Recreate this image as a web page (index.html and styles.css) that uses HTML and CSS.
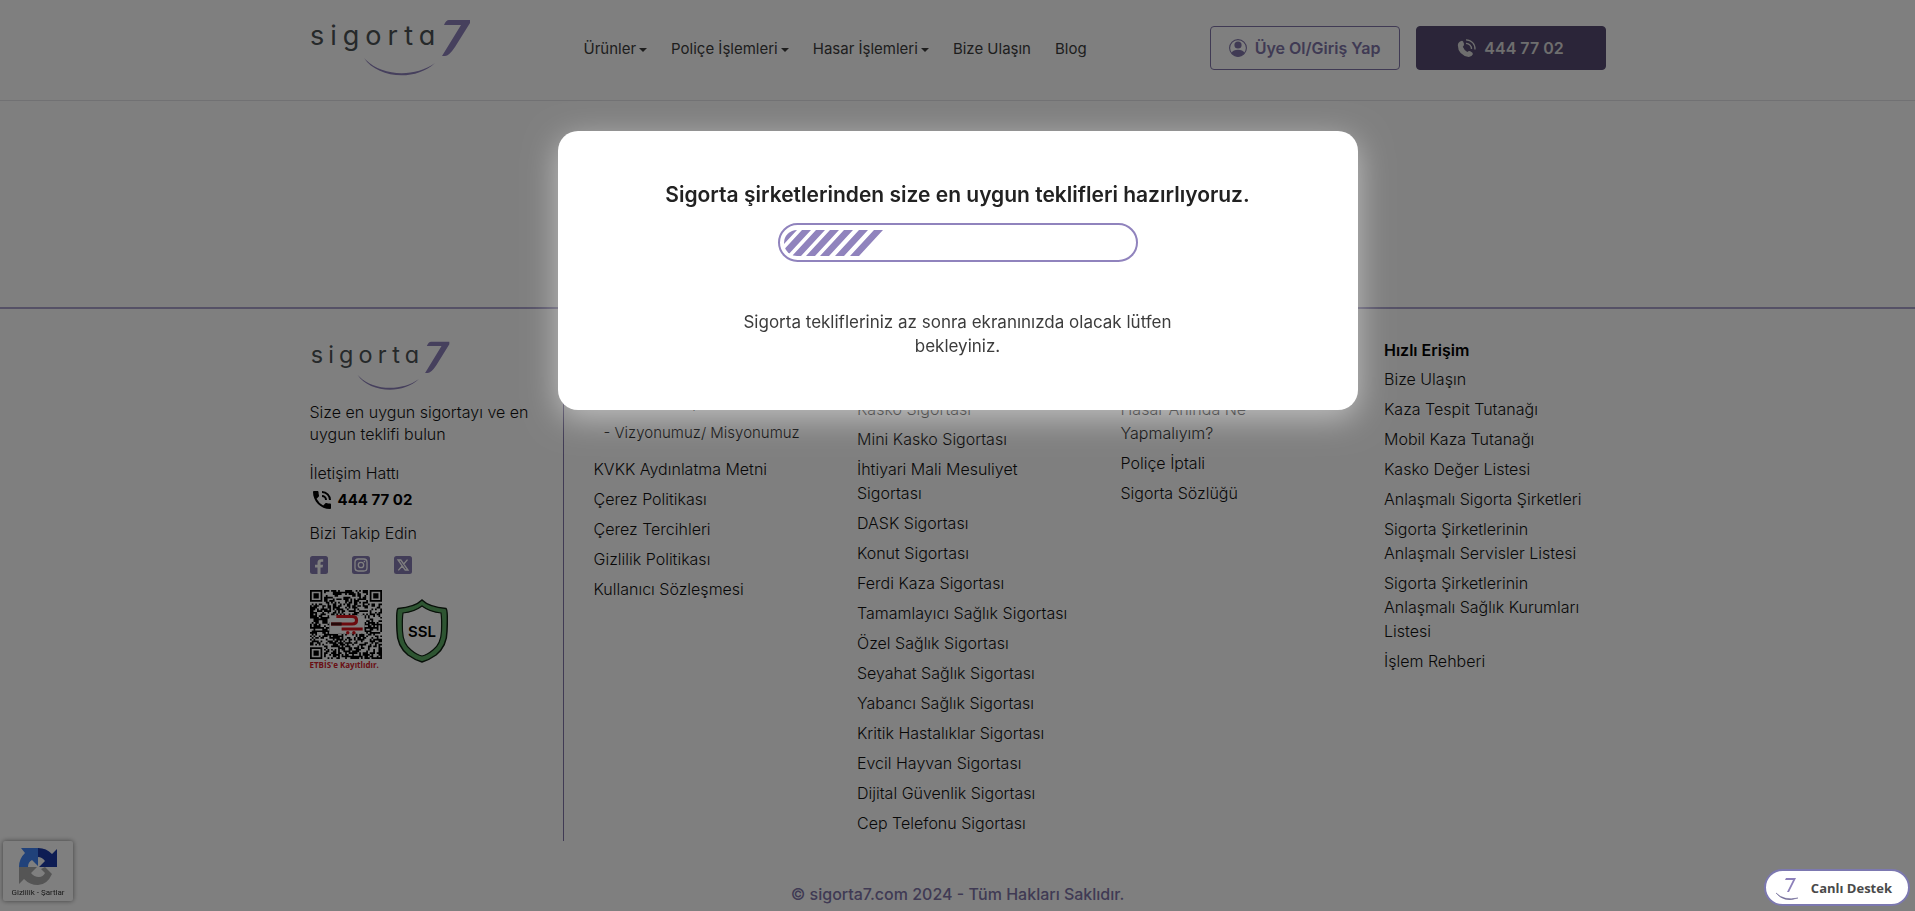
FILE: index.html
```html
<!DOCTYPE html>
<html lang="tr">
<head>
  <meta charset="UTF-8" />
  <meta name="viewport" content="width=device-width, initial-scale=1.0"/>
  <title>sigorta7 - Teklifler</title>
  <link rel="stylesheet" href="styles.css">
</head>
<body>

  <header class="header">
    <div class="container header-row">
      <a class="logo" href="#">
        <svg width="160" height="60" viewBox="0 0 160 60">
          <text class="logo-text" x="0" y="27">sigorta</text>
          <path class="logo-mark" d="M139 2H160V5L145 29Q139 38 135 38H132L151 7H134Q136 2 139 2Z"/>
          <path class="logo-mark" d="M54 40C67 60 105 64 125 45C104 60 72 58 56 42Z"/>
        </svg>
      </a>
      <nav class="nav">
        <a class="dropdown" href="#">Ürünler</a>
        <a class="dropdown" href="#">Poliçe İşlemleri</a>
        <a class="dropdown" href="#">Hasar İşlemleri</a>
        <a href="#">Bize Ulaşın</a>
        <a href="#">Blog</a>
      </nav>
      <div class="actions">
        <button class="btn btn-outline">
          <svg width="18" height="18" viewBox="0 0 18 18">
            <circle cx="9" cy="9" r="8.4" fill="none" stroke="currentColor" stroke-width="1.1"/>
            <circle cx="9" cy="6" r="3.6" fill="currentColor"/>
            <path d="M2.4 14C3.5 11.6 6 10.8 9 10.8S14.5 11.6 15.6 14Q13 17.4 9 17.4T2.4 14Z" fill="currentColor"/>
          </svg>
          Üye Ol/Giriş Yap
        </button>
        <a class="btn btn-dark" href="tel:4447702">
          <svg width="19" height="19" viewBox="0 0 19 19">
            <path d="M3 2.5L5 1.8Q6.3 1.9 7 5Q7.2 6.7 5.8 7.8Q7 11 10.3 13Q11.8 11.5 13.3 12.2Q16.4 13.8 15.9 15.2Q14.4 18 11.8 18Q1 16 .8 6Q.9 3.6 3 2.5Z" fill="currentColor"/>
            <path d="M9 .8A9 9 0 0 1 18 10.5M9 4.3A5.6 5.6 0 0 1 14.5 10" fill="none" stroke="currentColor" stroke-width="1.3"/>
          </svg>
          444 77 02
        </a>
      </div>
    </div>
  </header>

  <main class="content"></main>

  <footer class="footer">
    <div class="container footer-row">
      <div class="about">
        <a class="logo" href="#">
          <svg width="140" height="52" viewBox="0 0 160 60">
            <text class="logo-text" x="0" y="27">sigorta</text>
            <path class="logo-mark" d="M139 2H160V5L145 29Q139 38 135 38H132L151 7H134Q136 2 139 2Z"/>
            <path class="logo-mark" d="M54 40C67 60 105 64 125 45C104 60 72 58 56 42Z"/>
          </svg>
        </a>
        <p class="slogan">Size en uygun sigortayı ve en uygun teklifi bulun</p>
        <p>İletişim Hattı</p>
        <a class="phone" href="tel:4447702">
          <svg width="24" height="24" viewBox="0 0 24 24">
            <path d="M20 15.5c-1.2 0-2.5-.2-3.6-.6h-.3c-.3 0-.5.1-.7.3l-2.2 2.2a15 15 0 0 1-6.6-6.6l2.2-2.2c.3-.3.4-.7.2-1-.3-1.1-.5-2.4-.5-3.6 0-.5-.5-1-1-1H4c-.5 0-1 .5-1 1 0 9.4 7.6 17 17 17 .5 0 1-.5 1-1v-3.5c0-.5-.5-1-1-1zM19 12h2a9 9 0 0 0-9-9v2a7 7 0 0 1 7 7zM15 12h2a5 5 0 0 0-5-5v2a3 3 0 0 1 3 3z" fill="currentColor"/>
          </svg>
          444 77 02
        </a>
        <p>Bizi Takip Edin</p>
        <div class="social">
          <a href="#" aria-label="Facebook">
            <svg width="18" height="18" viewBox="0 0 18 18">
              <rect width="18" height="18" rx="2.5" fill="#857ab0"/>
              <path d="M7.5 18V11.5H5V8.7H7.5V6.8Q7.5 3.2 11 3.2H13.2V5.8H11.8Q10.5 5.8 10.5 7V8.7H13.1L12.6 11.5H10.5V18Z" fill="#fff"/>
            </svg>
          </a>
          <a href="#" aria-label="Instagram">
            <svg width="18" height="18" viewBox="0 0 18 18">
              <rect width="18" height="18" rx="2.5" fill="#857ab0"/>
              <g fill="none" stroke="#fff" stroke-width="1.3"><rect x="3" y="3" width="12" height="12" rx="3.2"/><circle cx="9" cy="9" r="2.7"/></g>
              <circle cx="12.4" cy="5.6" r=".8" fill="#fff"/>
            </svg>
          </a>
          <a href="#" aria-label="X">
            <svg width="18" height="18" viewBox="0 0 18 18">
              <rect width="18" height="18" rx="2.5" fill="#857ab0"/>
              <path d="M4 4H6.8L14 14H11.2ZM13.5 3.6L9.7 8M8.2 10L4.3 14.4" fill="none" stroke="#fff" stroke-width="1.3"/>
            </svg>
          </a>
        </div>
        <div class="badges">
          <a class="etbis" href="#">
            <svg width="72" height="69" viewBox="0 0 41 41" preserveAspectRatio="none" aria-label="ETBİS karekod">
              <path id="qrDots" fill="#000"/>
              <rect x="11" y="15" width="20" height="11" fill="#fff"/>
              <path d="M15 15.8H24Q26.5 15.8 26.5 18T24 20.2H12M18 23.2H30" fill="none" stroke="#d8141c" stroke-width="1.8"/>
              <path d="M12 20.2H18" stroke="#4a1212" stroke-width="1.8"/>
              <circle cx="21.5" cy="25.4" r="1" fill="#d8141c"/><circle cx="25" cy="25.4" r="1" fill="#d8141c"/>
            </svg>
            <span>ETBİS'e Kayıtlıdır.</span>
          </a>
          <svg width="52" height="64" viewBox="0 0 52 64" aria-label="SSL">
            <path d="M26 1Q33 8 50 9.5Q52 11 51 32Q51 47 40 56Q33 61 26 63Q19 61 12 56Q1 47 1 32Q0 11 2 9.5Q19 8 26 1Z" fill="#5cab65" stroke="#102012" stroke-width="1.5"/>
            <path d="M26 7Q34 13 45 14Q46 20 45.5 32Q45 45 37 51Q31 56 26 57Q21 56 15 51Q7 45 6.5 32Q6 20 7 14Q18 13 26 7Z" fill="#fff" stroke="#102012" stroke-width="1.2"/>
            <text class="ssl-text" x="26" y="38" text-anchor="middle">SSL</text>
          </svg>
        </div>
      </div>

      <div class="links">
        <h4>Kurumsal</h4>
        <ul>
          <li><a href="#">Hakkımızda</a>
            <ul class="sub">
              <li><a href="#">Yönetim Yapısı</a></li>
              <li><a href="#">Vizyonumuz/ Misyonumuz</a></li>
            </ul>
          </li>
          <li><a href="#">KVKK Aydınlatma Metni</a></li>
          <li><a href="#">Çerez Politikası</a></li>
          <li><a href="#">Çerez Tercihleri</a></li>
          <li><a href="#">Gizlilik Politikası</a></li>
          <li><a href="#">Kullanıcı Sözleşmesi</a></li>
        </ul>
      </div>

      <div class="links">
        <h4>Ürünler</h4>
        <ul>
          <li><a href="#">Trafik Sigortası</a></li>
          <li><a href="#">Kasko Sigortası</a></li>
          <li><a href="#">Mini Kasko Sigortası</a></li>
          <li><a href="#">İhtiyari Mali Mesuliyet Sigortası</a></li>
          <li><a href="#">DASK Sigortası</a></li>
          <li><a href="#">Konut Sigortası</a></li>
          <li><a href="#">Ferdi Kaza Sigortası</a></li>
          <li><a href="#">Tamamlayıcı Sağlık Sigortası</a></li>
          <li><a href="#">Özel Sağlık Sigortası</a></li>
          <li><a href="#">Seyahat Sağlık Sigortası</a></li>
          <li><a href="#">Yabancı Sağlık Sigortası</a></li>
          <li><a href="#">Kritik Hastalıklar Sigortası</a></li>
          <li><a href="#">Evcil Hayvan Sigortası</a></li>
          <li><a href="#">Dijital Güvenlik Sigortası</a></li>
          <li><a href="#">Cep Telefonu Sigortası</a></li>
        </ul>
      </div>

      <div class="links">
        <h4>Yardım</h4>
        <ul>
          <li><a href="#">Sık Sorulan Sorular</a></li>
          <li><a href="#">Hasar Anında Ne Yapmalıyım?</a></li>
          <li><a href="#">Poliçe İptali</a></li>
          <li><a href="#">Sigorta Sözlüğü</a></li>
        </ul>
      </div>

      <div class="links">
        <h4>Hızlı Erişim</h4>
        <ul>
          <li><a href="#">Bize Ulaşın</a></li>
          <li><a href="#">Kaza Tespit Tutanağı</a></li>
          <li><a href="#">Mobil Kaza Tutanağı</a></li>
          <li><a href="#">Kasko Değer Listesi</a></li>
          <li><a href="#">Anlaşmalı Sigorta Şirketleri</a></li>
          <li><a href="#">Sigorta Şirketlerinin Anlaşmalı Servisler Listesi</a></li>
          <li><a href="#">Sigorta Şirketlerinin Anlaşmalı Sağlık Kurumları Listesi</a></li>
          <li><a href="#">İşlem Rehberi</a></li>
        </ul>
      </div>
    </div>
    <p class="copyright">© sigorta7.com 2024 - Tüm Hakları Saklıdır.</p>
  </footer>

  <div class="recaptcha">
    <svg width="38" height="38" viewBox="0 0 38 38">
      <path d="M19 0A19 19 0 0 1 33 6L38 1V19H20L26 13Q23 9 19 9Z" fill="#1c3aa9"/>
      <path d="M19 0V18L13 12Q9 14 9 19H0A19 19 0 0 1 6 5L2 0Z" fill="#4285f4"/>
      <path d="M0 19H18L12 25Q15 29 20 29Q24 29 26 25L22 21L26 19L33 26Q28 37 19 37A19 19 0 0 1 5 31L0 36Z" fill="#ababab"/>
    </svg>
    <span><a href="#">Gizlilik</a> - <a href="#">Şartlar</a></span>
  </div>

  <div class="overlay">
    <div class="modal" role="dialog" aria-labelledby="modalTitle">
      <h2 id="modalTitle">Sigorta şirketlerinden size en uygun teklifleri hazırlıyoruz.</h2>
      <div class="progress" role="progressbar" aria-label="Teklifler hazırlanıyor">
        <svg width="104" height="26" viewBox="0 0 104 26">
          <clipPath id="barClip"><path d="M13 0H104V26H13A13 13 0 0 1 13 0Z"/></clipPath>
          <path clip-path="url(#barClip)" fill="#9083bd" d="M4 0H13L-11 26H-20ZM18 0H27L3 26H-6ZM32 0H41L17 26H8ZM46 0H55L31 26H22ZM60 0H69L45 26H36ZM75 0H84L60 26H51ZM90 0H99L75 26H66Z"/>
        </svg>
      </div>
      <p>Sigorta teklifleriniz az sonra ekranınızda olacak lütfen bekleyiniz.</p>
    </div>
  </div>

  <button class="chat">
    <svg width="24" height="24" viewBox="0 0 24 24">
      <path d="M11 2H21L14 16H12L18 4H10Z" fill="#8d80ba"/>
      <path d="M1 17Q9 25 23 22Q9 27 1 17Z" fill="#6d6694" stroke="#6d6694" stroke-width=".5"/>
    </svg>
    Canlı Destek
  </button>

  <script>
    // QR pattern, 41x41 modules
    const size = 41;
    let seed = 77;
    let d = '';

    function inFinder(x, y) {
      const corners = [[0, 0], [size - 7, 0], [0, size - 7]];
      for (const [cx, cy] of corners) {
        const dx = x - cx, dy = y - cy;
        if (dx >= -1 && dx <= 7 && dy >= -1 && dy <= 7) {
          const r = Math.max(Math.abs(dx - 3), Math.abs(dy - 3));
          return r === 3 || r <= 1 ? 1 : 0;
        }
      }
      return -1;
    }

    for (let y = 0; y < size; y++) {
      for (let x = 0; x < size; x++) {
        seed = (seed * 1103515245 + 12345) % 2147483648;
        const f = inFinder(x, y);
        if (f === 1 || (f === -1 && seed / 2147483648 > 0.45)) {
          d += `M${x} ${y}h1v1h-1z`;
        }
      }
    }
    document.getElementById('qrDots').setAttribute('d', d);
  </script>

</body>
</html>
```
FILE: styles.css
```css
* {
  box-sizing: border-box;
}
body {
  font-family: Inter, "Noto Sans", sans-serif;
  font-size: 16px;
  margin: 0;
  min-height: 100vh;
  display: flex;
  flex-direction: column;
  background: #fff;
  color: #111;
}
a {
  color: inherit;
  text-decoration: none;
}
p, h2, h4, ul {
  margin: 0;
  padding: 0;
}
ul {
  list-style: none;
}
svg {
  display: block;
}
.container {
  width: 100%;
  max-width: 1320px;
  margin: 0 auto;
  padding: 0 12px;
}
.logo-text {
  font-size: 27px;
  font-weight: 400;
  letter-spacing: 6px;
  font-feature-settings: "cv11";
  fill: #4c5254;
}
.logo-mark {
  fill: #8d80ba;
}

/* header */
.header {
  border-bottom: 1px solid #e3e3e6;
}
.header-row {
  display: flex;
  align-items: center;
  height: 100px;
  padding-bottom: 4px;
}
.header .logo {
  flex: 0 0 274px;
}
.nav {
  display: flex;
  gap: 24px;
  flex: 1;
  font-size: 15px;
  color: #3c3c3c;
}
.dropdown::after {
  content: "";
  display: inline-block;
  margin-left: 3px;
  vertical-align: 2px;
  border-top: 4px solid;
  border-left: 4px solid transparent;
  border-right: 4px solid transparent;
}
.actions {
  display: flex;
  gap: 16px;
}
.btn {
  display: flex;
  align-items: center;
  justify-content: center;
  gap: 8px;
  width: 190px;
  height: 44px;
  padding: 0;
  border: 1px solid #8075a8;
  border-radius: 4px;
  font-family: inherit;
  font-size: 16px;
  font-weight: 600;
  cursor: pointer;
}
.btn-outline {
  background: transparent;
  color: #8075a8;
}
.btn-dark {
  background: #564b72;
  border-color: #564b72;
  color: #ddd;
}

.content {
  flex: 1;
}

/* footer */
.footer {
  border-top: 2px solid #aaa3cc;
  padding-top: 29px;
}
.footer-row {
  display: flex;
  padding-right: 0;
}
.about {
  flex: 0 0 254px;
  padding-top: 2px;
  border-right: 1px solid #8075a8;
  font-weight: 300;
  line-height: 22px;
}
.about .slogan {
  margin: 9px 0 17px;
  max-width: 230px;
}
.phone {
  display: flex;
  align-items: center;
  gap: 4px;
  margin: 4px 0 10px;
  color: #000;
  font-size: 15px;
  font-weight: 700;
}
.social {
  display: flex;
  gap: 24px;
  margin: 12px 0 16px;
}
.badges {
  display: flex;
  align-items: center;
  gap: 14px;
}
.etbis span {
  display: block;
  color: #d3202a;
  font-family: "Open Sans", sans-serif;
  font-size: 8px;
  font-weight: 700;
  line-height: 12px;
  white-space: nowrap;
}
.ssl-text {
  font-size: 15px;
  font-weight: 600;
}
.links {
  flex: 1;
  padding: 0 20px 0 30px;
  font-weight: 300;
  line-height: 24px;
}
.links h4 {
  font-size: 16px;
  font-weight: 600;
  color: #000;
  margin-bottom: 5px;
}
.links li {
  margin-bottom: 6px;
}
.links .sub {
  margin-bottom: 12px;
  padding-left: 10px;
  font-size: 15px;
}
.sub li::before {
  content: "- ";
}
.copyright {
  padding: 41px 0 5px;
  text-align: center;
  color: #8075a8;
  font-weight: 500;
  line-height: 24px;
}

.recaptcha {
  position: fixed;
  left: 3px;
  bottom: 10px;
  width: 70px;
  height: 60px;
  display: flex;
  flex-direction: column;
  align-items: center;
  padding-top: 7px;
  background: #fff;
  border-radius: 2px;
  box-shadow: 0 0 5px gray;
  font-family: Roboto, sans-serif;
  font-size: 8px;
  line-height: 14px;
  color: #333;
}

/* loading dialog */
.overlay {
  position: fixed;
  inset: 0;
  padding: 131px 16px 0;
  background: rgba(0,0,0,0.5);
}
.modal {
  display: flex;
  flex-direction: column;
  align-items: center;
  max-width: 800px;
  margin: 0 auto;
  padding: 50px 20px 52px;
  background: #fff;
  border-radius: 20px;
  box-shadow: 0 8px 32px rgba(255,255,255,0.5);
  text-align: center;
}
.modal h2 {
  font-size: 21px;
  font-weight: 600;
  line-height: 28px;
  color: #222;
}
.modal p {
  max-width: 460px;
  margin-top: 48px;
  font-size: 17px;
  line-height: 24px;
  color: #3c3c3c;
}
.progress {
  width: 360px;
  max-width: 100%;
  height: 39px;
  margin-top: 14px;
  padding: 5px 4px;
  border: 2px solid #9083bd;
  border-radius: 20px;
}

.chat {
  position: fixed;
  right: 5px;
  bottom: 5px;
  display: flex;
  align-items: center;
  gap: 12px;
  height: 37px;
  padding: 0 16px 0 9px;
  background: #fff;
  border: 2px solid #7c78b0;
  border-radius: 20px;
  font-family: "Open Sans", sans-serif;
  font-size: 13px;
  font-weight: 700;
  color: #4a4a4a;
  cursor: pointer;
}
```
